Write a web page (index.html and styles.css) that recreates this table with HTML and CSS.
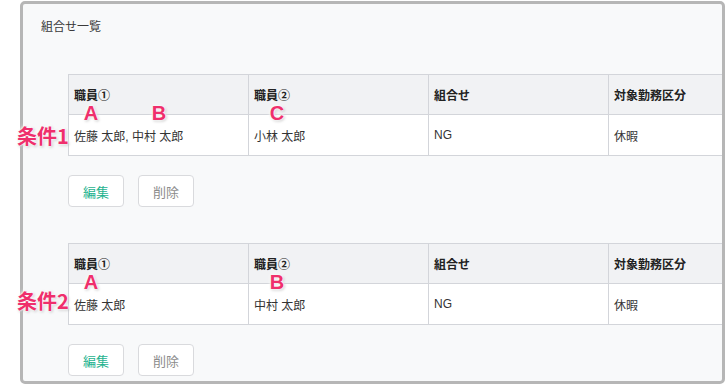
FILE: index.html
```html
<!DOCTYPE html>
<html lang="ja">
<head>
<meta charset="utf-8">
<link rel="stylesheet" href="styles.css">
</head>
<body>
<div class="panel">
  <div class="title">組合せ一覧</div>

  <section class="combo first">
    <div class="table-wrap">
      <table>
        <thead>
          <tr><th>職員①</th><th>職員②</th><th>組合せ</th><th>対象勤務区分</th></tr>
        </thead>
        <tbody>
          <tr><td>佐藤 太郎, 中村 太郎</td><td>小林 太郎</td><td class="latin">NG</td><td>休暇</td></tr>
        </tbody>
      </table>
    </div>
    <div class="actions">
      <button class="btn edit">編集</button>
      <button class="btn del">削除</button>
    </div>
    <span class="note cond c1">条件1</span>
    <span class="note letter a1">A</span>
    <span class="note letter b1">B</span>
    <span class="note letter c1l">C</span>
  </section>

  <section class="combo second">
    <div class="table-wrap">
      <table>
        <thead>
          <tr><th>職員①</th><th>職員②</th><th>組合せ</th><th>対象勤務区分</th></tr>
        </thead>
        <tbody>
          <tr><td>佐藤 太郎</td><td>中村 太郎</td><td class="latin">NG</td><td>休暇</td></tr>
        </tbody>
      </table>
    </div>
    <div class="actions">
      <button class="btn edit">編集</button>
      <button class="btn del">削除</button>
    </div>
    <span class="note cond c2">条件2</span>
    <span class="note letter a2">A</span>
    <span class="note letter b2">B</span>
  </section>
</div>
</body>
</html>
```

FILE: styles.css
```css
* { box-sizing: border-box; }

html, body {
  margin: 0;
  background: #ffffff;
}

body {
  padding: 1px 2px 0 20px;
  font-family: "Liberation Sans", "Noto Sans CJK JP", sans-serif;
  color: #333333;
}

.panel {
  width: 705px;
  height: 383px;
  border: 3px solid #b6b6b6;
  border-radius: 5px;
  background: #f8f9fa;
  padding: 14px 0 0 18px;
}

.title {
  font-size: 12px;
  line-height: 18px;
  color: #3a3a3a;
  margin-bottom: 38px;
}

.combo {
  position: relative;
  margin-left: 27px;
  margin-bottom: 36px;
}

.table-wrap {
  overflow: hidden;
  width: 654px;
}

table {
  border-collapse: collapse;
  table-layout: fixed;
  width: 721px;
  font-size: 12px;
}

th, td {
  width: 180px;
  border: 1px solid #d3d5da;
  padding: 0 5px;
  text-align: left;
  white-space: nowrap;
}

th {
  height: 40px;
  background: #f1f2f4;
  font-weight: bold;
  color: #222222;
}

td {
  height: 41px;
  background: #ffffff;
  color: #333333;
}

.actions {
  display: flex;
  gap: 14px;
  margin-top: 19px;
}

.btn {
  width: 56px;
  height: 32px;
  border: 1px solid #d9dadd;
  border-radius: 4px;
  background: #ffffff;
  font-family: "Noto Sans CJK JP", sans-serif;
  font-size: 13px;
  padding: 0;
}

.btn.edit { color: #1fb38f; }
.btn.del { color: #8c8c8c; }

.note {
  position: absolute;
  color: #ef2f6c;
  font-weight: bold;
  line-height: 1;
  text-shadow: 0 0 2px #ffffff, 0 0 3px #ffffff, 0 0 4px #ffffff, 1px 1px 3px rgba(0,0,0,0.35);
}

.letter {
  font-family: "Liberation Sans", sans-serif;
  font-size: 20px;
  transform: translate(-50%, -50%);
}

.cond {
  font-family: "Noto Sans CJK JP", sans-serif;
  font-size: 20px;
  transform: translateY(-50%);
  left: -51px;
  white-space: nowrap;
}

.c1 { top: 62px; }
.c2 { top: 58px; }
.a1 { left: 23px; top: 39px; }
.b1 { left: 91px; top: 39px; }
.c1l { left: 209px; top: 39px; }
.a2 { left: 23px; top: 39px; }
.b2 { left: 209px; top: 39px; }
```
